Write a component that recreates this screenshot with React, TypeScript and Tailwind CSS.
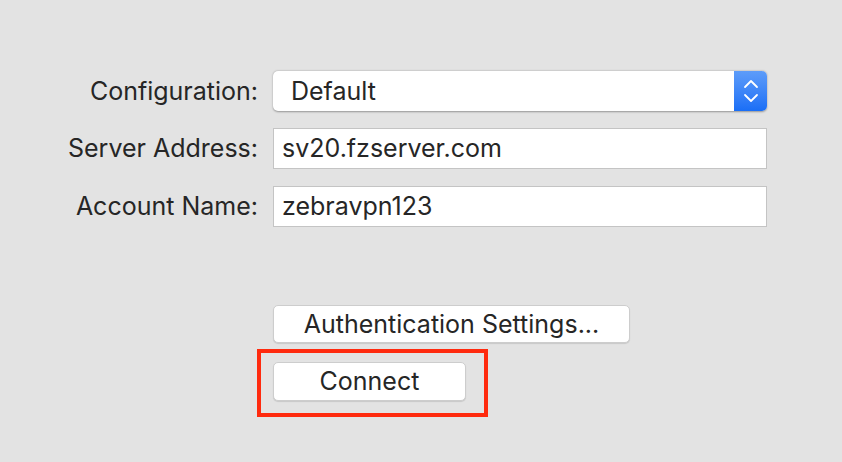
import { ChevronUp, ChevronDown } from 'lucide-react'

const fields = [
  { label: 'Server Address:', value: 'sv20.fzserver.com' },
  { label: 'Account Name:', value: 'zebravpn123' },
]

export default function App() {
  return (
    <div
      className="w-[842px] h-[462px] bg-[#e3e3e3] text-[#262626] pt-[71px] text-[25px]"
      style={{ fontFamily: 'Inter, "Liberation Sans", sans-serif' }}
    >
      <div className="grid grid-cols-[258px_494px] gap-x-[15px] gap-y-[17px] items-center">
        {/* Configuration popup */}
        <div className="text-right leading-none">Configuration:</div>
        <div className="h-[40px] flex rounded-[5px] bg-white shadow-[0_0.5px_2px_rgba(0,0,0,0.35)] overflow-hidden">
          <div className="flex-1 flex items-center pl-[18px] leading-none">Default</div>
          <div className="w-[33px] flex flex-col items-center justify-center bg-gradient-to-b from-[#5d9cf9] to-[#196ef6] text-white">
            <ChevronUp size={24} strokeWidth={1.8} className="-mb-[5px]" />
            <ChevronDown size={24} strokeWidth={1.8} className="-mt-[5px]" />
          </div>
        </div>

        {/* Text fields */}
        {fields.map((f) => (
          <div key={f.label} className="contents">
            <div className="text-right leading-none">{f.label}</div>
            <div className="h-[41px] flex items-center bg-white border border-[#c4c4c4] pl-[8px] leading-none">
              {f.value}
            </div>
          </div>
        ))}
      </div>

      {/* Buttons */}
      <div className="ml-[273px] mt-[78px] flex flex-col items-start gap-[19px]">
        <button className="w-[357px] h-[38px] rounded-[5px] bg-white border border-[#cdcdcd] shadow-[0_1px_1px_rgba(0,0,0,0.12)] leading-none">
          Authentication Settings...
        </button>
        <div className="relative">
          <button className="w-[193px] h-[39px] rounded-[5px] bg-white border border-[#cdcdcd] shadow-[0_1px_1px_rgba(0,0,0,0.12)] leading-none">
            Connect
          </button>
          {/* annotation highlight */}
          <div className="absolute -left-[16px] -top-[13px] w-[231px] h-[68px] border-[4px] border-[#ff2a0e] pointer-events-none" />
        </div>
      </div>
    </div>
  )
}
